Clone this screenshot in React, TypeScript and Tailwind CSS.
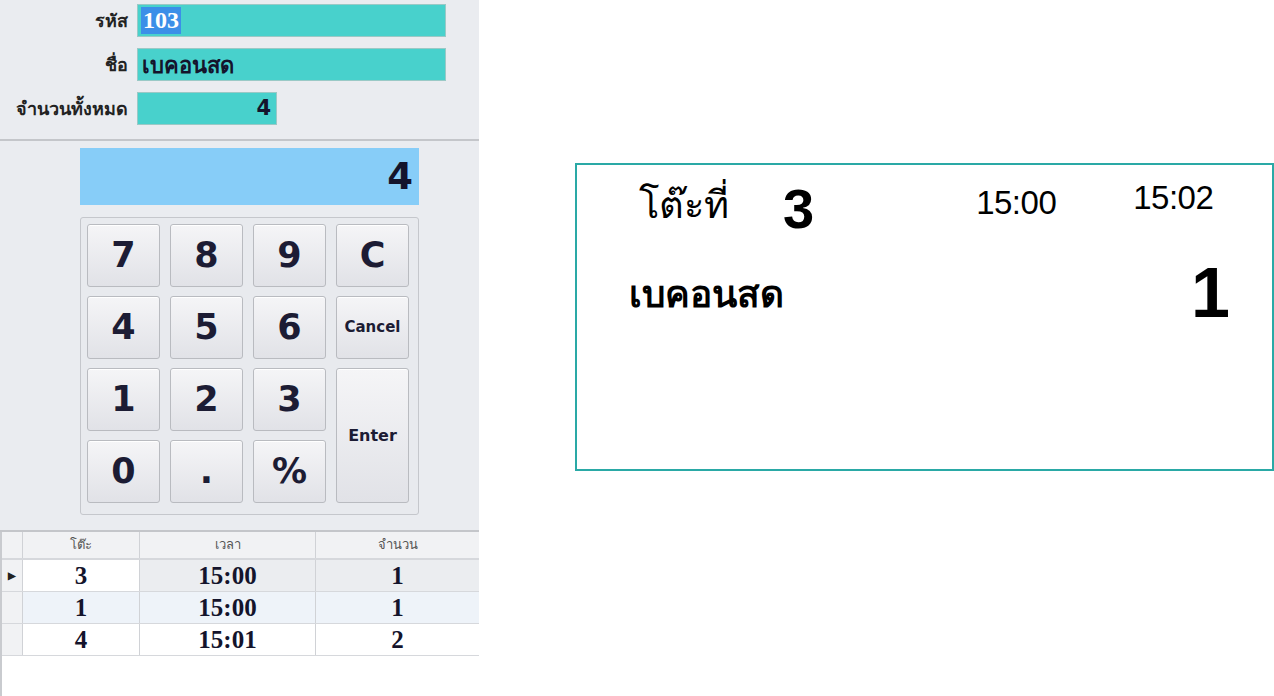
import React from "react";

const keys = [
	["7", "8", "9", "C"],
	["4", "5", "6", "Cancel"],
	["1", "2", "3"],
	["0", ".", "%"],
];

const rows = [
	{ table: "3", time: "15:00", qty: "1" },
	{ table: "1", time: "15:00", qty: "1" },
	{ table: "4", time: "15:01", qty: "2" },
];

const KeyButton = ({
	label,
	className = "",
}: {
	label: string;
	className?: string;
}) => {
	const small = label.length > 1;
	return (
		<button
			className={`flex items-center justify-center rounded-[3px] border border-[#b9bbc0] bg-gradient-to-b from-[#f5f5f7] to-[#e1e2e7] font-bold text-[#1c1c34] shadow-[inset_0_1px_0_#ffffff] ${
				small ? "text-[15px]" : "text-[35px]"
			} ${className}`}
		>
			{label}
		</button>
	);
};

export default function App() {
	return (
		<div className="flex h-[696px] w-[1274px] bg-white font-['Tahoma','DejaVu_Sans',sans-serif] overflow-hidden">
			{/* left panel */}
			<div className="flex w-[479px] shrink-0 flex-col">
				<div className="flex h-[141px] flex-col gap-[11px] border-b-2 border-[#c4c6ca] bg-[#eaecf0] pt-[4px]">
					<div className="flex items-center">
						<span className="w-[128px] text-right text-[18px] font-bold text-[#222]">รหัส</span>
						<div className="ml-[9px] flex h-[33px] w-[309px] items-center border border-[#9ac9c6] bg-[#48d1cc] px-[3px]">
							<span className="bg-[#3b8fe8] px-[2px] font-['Liberation_Serif',serif] text-[24px] font-bold leading-[27px] text-white">
								103
							</span>
						</div>
					</div>
					<div className="flex items-center">
						<span className="w-[128px] text-right text-[18px] font-bold text-[#222]">ชื่อ</span>
						<div className="ml-[9px] flex h-[33px] w-[309px] items-center border border-[#9ac9c6] bg-[#48d1cc] px-[4px] pt-[2px] text-[22px] font-bold text-[#14142c]">
							เบคอนสด
						</div>
					</div>
					<div className="flex items-center">
						<span className="w-[128px] text-right text-[18px] font-bold text-[#222]">จำนวนทั้งหมด</span>
						<div className="ml-[9px] flex h-[33px] w-[140px] items-center justify-end border border-[#9ac9c6] bg-[#48d1cc] px-[5px] text-[21px] font-bold text-[#14142c]">
							4
						</div>
					</div>
				</div>

				<div className="flex h-[391px] flex-col border-b-2 border-[#c4c6ca] bg-[#eaecf0] pl-[80px] pt-[7px]">
					<div className="flex h-[57px] w-[339px] items-center justify-end bg-[#87cdf8] pr-[6px] text-[37px] font-bold text-[#14142c]">
						4
					</div>
					<div className="mt-[12px] grid h-[298px] w-[339px] grid-cols-[73px_73px_73px_73px] grid-rows-[63px_63px_63px_63px] gap-x-[10px] gap-y-[9px] rounded-[3px] border border-[#c5c7cc] bg-[#e8eaee] pl-[6px] pt-[6px]">
						{keys.map((row) => row.map((k) => <KeyButton key={k} label={k} />))}
						<KeyButton label="Enter" className="col-start-4 row-span-2 row-start-3 h-[135px] text-[16px]" />
					</div>
				</div>

				<div className="flex flex-1 flex-col border-l-2 border-[#c9cbcf] bg-white">
					<div className="flex h-[28px] border-b-2 border-[#d6d8dc] bg-[#f1f2f4] text-[13px] text-[#555]">
						<div className="w-[21px] border-r border-[#d0d2d6]" />
						<div className="flex w-[117px] items-center justify-center border-r border-[#d0d2d6]">โต๊ะ</div>
						<div className="flex w-[176px] items-center justify-center border-r border-[#d0d2d6]">เวลา</div>
						<div className="flex flex-1 items-center justify-center">จำนวน</div>
					</div>
					{rows.map((r, i) => (
						<div
							key={i}
							className={`flex h-[32px] border-b border-[#d6d8dc] font-['Liberation_Serif',serif] text-[25px] font-bold text-[#14142c] ${
								i === 1 ? "bg-[#eef3f9]" : i === 0 ? "bg-[#ebedf0]" : "bg-white"
							}`}
						>
							<div className="flex w-[21px] items-center justify-center border-r border-[#d0d2d6] bg-[#f1f2f4] text-[10px] text-[#222]">
								{i === 0 ? "▶" : ""}
							</div>
							<div
								className={`flex w-[117px] items-center justify-center border-r border-[#d0d2d6] ${
									i === 0 ? "bg-white" : ""
								}`}
							>
								{r.table}
							</div>
							<div className="flex w-[176px] items-center justify-center border-r border-[#d0d2d6]">{r.time}</div>
							<div className="flex flex-1 items-center justify-center">{r.qty}</div>
						</div>
					))}
				</div>
			</div>

			{/* right display card */}
			<div className="ml-[96px] mt-[163px] h-[308px] w-[699px] border-2 border-[#2aa9a6] bg-white">
				<div className="flex items-start pt-[14px]">
					<span className="ml-[62px] font-['Liberation_Serif',serif] text-[38px] font-normal leading-[52px] text-black">โต๊ะที่</span>
					<span className="ml-[54px] font-['Liberation_Sans',sans-serif] text-[56px] font-bold leading-[60px] text-black">3</span>
					<span className="ml-[162px] mt-[4px] font-['Liberation_Sans',sans-serif] text-[33px] leading-[40px] tracking-[-0.5px] text-black">15:00</span>
					<span className="ml-[77px] mt-[1px] font-['Liberation_Sans',sans-serif] text-[33px] leading-[36px] tracking-[-0.5px] text-black">15:02</span>
				</div>
				<div className="mt-[18px] flex items-start justify-between pr-[42px]">
					<span className="ml-[52px] mt-[18px] text-[37px] font-bold leading-[40px] text-black">เบคอนสด</span>
					<span className="font-['Liberation_Sans',sans-serif] text-[70px] font-bold leading-[72px] text-black">1</span>
				</div>
			</div>
		</div>
	);
}
